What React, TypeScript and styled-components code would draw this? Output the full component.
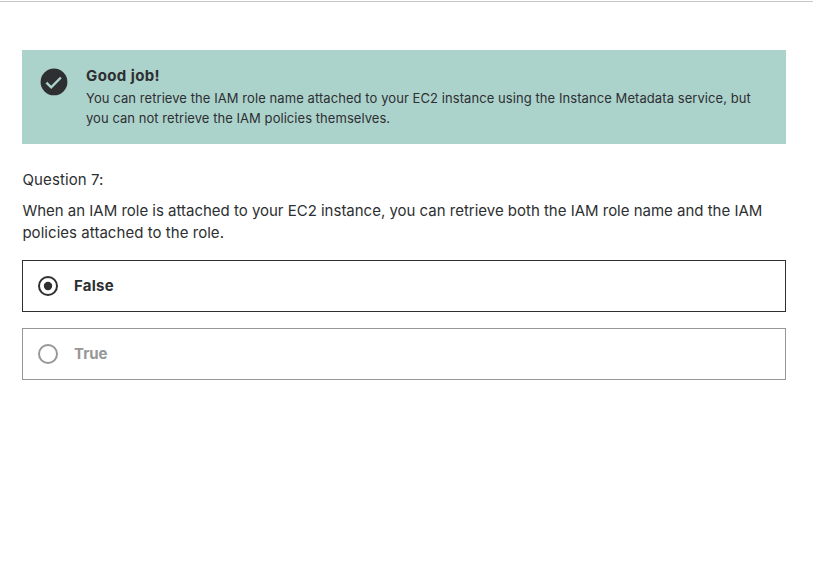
import React from "react";
import styled, { createGlobalStyle } from "styled-components";

const GlobalStyle = createGlobalStyle`
  * { box-sizing: border-box; }
  body { margin: 0; background: #fff; font-family: "Inter", "Liberation Sans", sans-serif; color: #2d2f31; }
`;
const Page = styled.main`
  min-height: 583px;
  padding-top: 1px;
`;
const Divider = styled.hr`
  height: 1px;
  margin: 0;
  border: 0;
  background: #c6c7c7;
`;
const Content = styled.div`
  padding: 48px 27px 0 22px;
`;
const Alert = styled.section`
  display: flex;
  gap: 18px;
  height: 94px;
  background: #acd2cc;
  padding: 16px 18px;
`;
const CheckIcon = styled.svg`
  flex: none;
  width: 28px;
  height: 28px;
  margin-top: 2px;
`;
const Line = styled.span<{ $tracking?: number }>`
  display: block;
  width: max-content;
  white-space: nowrap;
  letter-spacing: ${(p) => p.$tracking ?? 0}px;
`;
const AlertTitle = styled.h2`
  margin: 0;
  font-size: 15px;
  line-height: 20px;
  font-weight: 700;
  letter-spacing: 0.4px;
`;
const AlertText = styled.p`
  margin: 2px 0 0;
  font-size: 13px;
  line-height: 20px;
`;
const Label = styled.div`
  margin-top: 25px;
  padding-left: 0.5px;
  font-size: 15px;
  line-height: 22px;
  letter-spacing: 0.1px;
`;
const Prompt = styled.p`
  margin: 9px 0 16px;
  padding-left: 0.4px;
  font-size: 15px;
  line-height: 22px;
`;
const Option = styled.div<{ $selected?: boolean }>`
  display: flex;
  align-items: center;
  gap: 16px;
  height: 52px;
  padding-left: 15px;
  margin-bottom: 16px;
  border: 1px solid currentColor;
  color: ${(p) => (p.$selected ? "#2d2f31" : "#969797")};
`;
const OptionText = styled.span<{ $tracking: number }>`
  padding-bottom: 1px;
  font-size: 15px;
  line-height: 19px;
  font-weight: 700;
  letter-spacing: ${(p) => p.$tracking}px;
`;
const RadioSvg = styled.svg`
  flex: none;
  width: 20px;
  height: 20px;
`;

function Radio({ checked }: { checked?: boolean }) {
  return (
    <RadioSvg viewBox="0 0 20 20">
      <circle cx="10" cy="10" r="9" fill="none" stroke="currentColor" strokeWidth="2" />
      {checked && <circle cx="10" cy="10" r="4.2" fill="currentColor" />}
    </RadioSvg>
  );
}

export default function App() {
  return (
    <Page>
      <GlobalStyle />
      <Divider />
      <Content>
        <Alert>
          <CheckIcon viewBox="0 0 28 28">
            <circle cx="14" cy="13.9" r="13.4" fill="#2d2f31" />
            <path d="M6.4 14.6l4.8 4.7L20.9 9.5" fill="none" stroke="#acd2cc" strokeWidth="2.4" />
          </CheckIcon>
          <div>
            <AlertTitle>Good job!</AlertTitle>
            <AlertText>
              <Line $tracking={0.072}>You can retrieve the IAM role name attached to your EC2 instance using the Instance Metadata service, but</Line>
              <Line $tracking={0.05}>you can not retrieve the IAM policies themselves.</Line>
            </AlertText>
          </div>
        </Alert>
        <Label>Question 7:</Label>
        <Prompt>
          <Line $tracking={-0.01}>When an IAM role is attached to your EC2 instance, you can retrieve both the IAM role name and the IAM</Line>
          <Line $tracking={0.045}>policies attached to the role.</Line>
        </Prompt>
        <Option $selected>
          <Radio checked />
          <OptionText $tracking={0.25}>False</OptionText>
        </Option>
        <Option>
          <Radio />
          <OptionText $tracking={0}>True</OptionText>
        </Option>
      </Content>
    </Page>
  );
}
